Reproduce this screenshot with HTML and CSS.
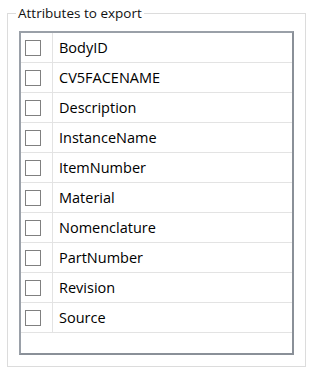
FILE: index.html
```html
<!DOCTYPE html>
<html lang="en">
<head>
  <meta charset="UTF-8">
  <title>Attributes to export</title>
  <link rel="stylesheet" href="styles.css">
</head>
<body>
  <fieldset class="group">
    <legend>Attributes to export</legend>
    <div class="list">
      <table class="attr-table">
        <tr><td class="check"><span class="box"></span></td><td class="name">BodyID</td></tr>
        <tr><td class="check"><span class="box"></span></td><td class="name">CV5FACENAME</td></tr>
        <tr><td class="check"><span class="box"></span></td><td class="name">Description</td></tr>
        <tr><td class="check"><span class="box"></span></td><td class="name">InstanceName</td></tr>
        <tr><td class="check"><span class="box"></span></td><td class="name">ItemNumber</td></tr>
        <tr><td class="check"><span class="box"></span></td><td class="name">Material</td></tr>
        <tr><td class="check"><span class="box"></span></td><td class="name">Nomenclature</td></tr>
        <tr><td class="check"><span class="box"></span></td><td class="name">PartNumber</td></tr>
        <tr><td class="check"><span class="box"></span></td><td class="name">Revision</td></tr>
        <tr><td class="check"><span class="box"></span></td><td class="name">Source</td></tr>
      </table>
    </div>
  </fieldset>
</body>
</html>
```

FILE: styles.css
```css
body {
  margin: 0;
  padding: 5px 0 0 7px;
  background: #ffffff;
  font-family: 'Open Sans', 'Noto Sans', sans-serif;
  font-size: 14.5px;
  color: #000000;
}

.group {
  width: 275px;
  margin: 0;
  padding: 10px 11px 11px 11px;
  border: 1px solid #dcdcdc;
}

.group legend {
  margin-left: -3px;
  padding: 0 2px;
  font-size: 13.5px;
  line-height: 16px;
  color: #111111;
}

.list {
  height: 320px;
  border: 2px solid #8d939b;
  border-color: #9aa0a8 #8a9098 #8a9098 #9aa0a8;
  background: #ffffff;
}

.attr-table {
  width: 100%;
  border-collapse: collapse;
}

.attr-table td {
  height: 29px;
  padding: 0;
  border-bottom: 1px solid #e3e3e3;
}

.attr-table .check {
  width: 31px;
  border-right: 1px solid #e3e3e3;
}

.box {
  display: block;
  width: 14px;
  height: 14px;
  margin-left: 4px;
  border: 1px solid #808080;
}

.attr-table .name {
  padding-left: 6px;
}
```
